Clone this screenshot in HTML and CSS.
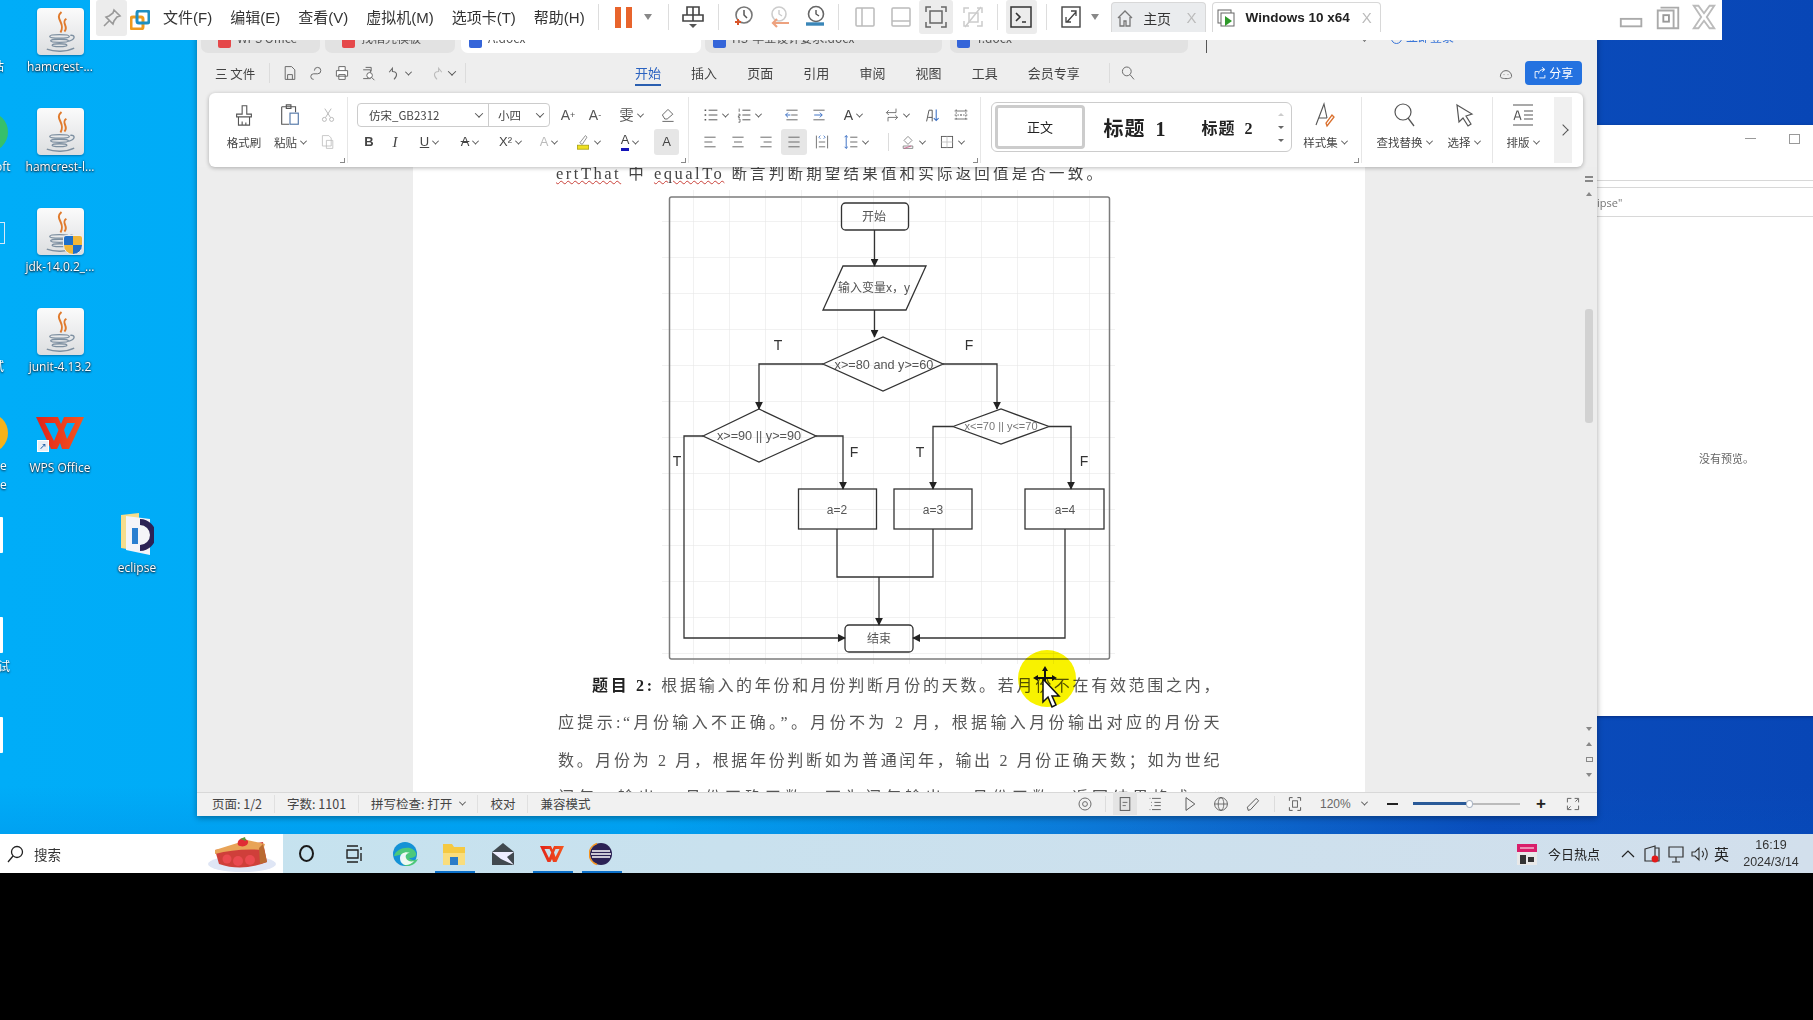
FILE: index.html
```html
<!DOCTYPE html>
<html lang="zh-CN">
<head>
<meta charset="utf-8">
<title>Windows 10 x64</title>
<link rel="stylesheet" href="styles.css">
</head>
<body>
<svg class="sprite" aria-hidden="true">
  <symbol id="java" viewBox="0 0 48 48">
    <path d="M25 4c-8 7 5 11-1 21M30 11c-6 4 3 8-2 13" fill="none" stroke="#e07a2c" stroke-width="2"/>
    <g fill="none" stroke="#7d8fa0" stroke-width="1.4"><ellipse cx="23" cy="29" rx="10" ry="1.8"/><ellipse cx="23" cy="33.5" rx="9" ry="1.6"/><ellipse cx="23" cy="38" rx="7.5" ry="1.5"/><path d="M10 42c8 3 20 3 28-1M34 28c5-1 6 4-2 6"/></g>
  </symbol>
  <symbol id="pin" viewBox="0 0 20 20"><path d="M12 2l6 6-3 1-3 4-1 3-7-7 3-1 4-3zM7 13l-5 5" fill="none" stroke="#999" stroke-width="1.6"/></symbol>
  <symbol id="vm" viewBox="0 0 20 20"><rect x="1" y="7" width="12" height="12" rx="2" fill="none" stroke="#ef9a1d" stroke-width="3"/><rect x="7" y="1" width="12" height="12" rx="2" fill="none" stroke="#1f8fc2" stroke-width="3"/></symbol>
  <symbol id="send" viewBox="0 0 24 24"><path d="M6 2h12v8H6zM2 10h20v6H2zM12 2v8M12 10v6" fill="none" stroke="#444" stroke-width="1.6"/><path d="M8 19h8l-4 4z" fill="#555"/></symbol>
  <symbol id="s1" viewBox="0 0 24 24"><circle cx="13" cy="10" r="8" fill="none" stroke="#777" stroke-width="1.6"/><path d="M13 5v5l3 3" fill="none" stroke="#555" stroke-width="1.5"/><path d="M4 17h6M7 14v6" stroke="#d8552a" stroke-width="2"/></symbol>
  <symbol id="s2" viewBox="0 0 24 24"><circle cx="12" cy="9" r="7" fill="none" stroke="#ccc" stroke-width="1.6"/><path d="M12 5v4l3 2" fill="none" stroke="#ccc" stroke-width="1.4"/><path d="M22 18H6M10 14l-4 4 4 4" fill="none" stroke="#eda27f" stroke-width="2.2"/></symbol>
  <symbol id="s3" viewBox="0 0 24 24"><circle cx="13" cy="9" r="7.5" fill="none" stroke="#666" stroke-width="1.6"/><path d="M13 5v4l3 2" fill="none" stroke="#555" stroke-width="1.4"/><path d="M3 19h18" stroke="#3a86b8" stroke-width="3.4"/></symbol>
  <symbol id="pl" viewBox="0 0 24 24"><rect x="3" y="3" width="18" height="18" rx="1" fill="none" stroke="#bbb" stroke-width="1.5"/><path d="M9 3v18" stroke="#bbb" stroke-width="1.5"/></symbol>
  <symbol id="pb" viewBox="0 0 24 24"><rect x="3" y="3" width="18" height="18" rx="1" fill="none" stroke="#bbb" stroke-width="1.5"/><path d="M3 16h18" stroke="#bbb" stroke-width="1.5"/></symbol>
  <symbol id="fit" viewBox="0 0 24 24"><path d="M2 7V2h5M17 2h5v5M22 17v5h-5M7 22H2v-5" fill="none" stroke="#666" stroke-width="1.5"/><rect x="6" y="6" width="12" height="12" fill="none" stroke="#666" stroke-width="1.5"/></symbol>
  <symbol id="nofit" viewBox="0 0 24 24"><path d="M3 8V3h5M16 3h5v5M21 16v5h-5M8 21H3v-5M4 22L20 2" fill="none" stroke="#ccc" stroke-width="1.5"/><rect x="8" y="8" width="9" height="9" fill="none" stroke="#ccc" stroke-width="1.5"/></symbol>
  <symbol id="term" viewBox="0 0 24 24"><rect x="2" y="2" width="20" height="20" fill="none" stroke="#333" stroke-width="1.5"/><path d="M7 8l4 4-4 4M13 17h4" fill="none" stroke="#333" stroke-width="1.6"/></symbol>
  <symbol id="exp" viewBox="0 0 24 24"><rect x="3" y="2" width="18" height="20" fill="none" stroke="#444" stroke-width="1.4"/><path d="M8 17L17 7M12 6h5v5M7 12v5h5" fill="none" stroke="#444" stroke-width="1.3"/></symbol>
  <symbol id="home" viewBox="0 0 20 20"><path d="M3 10l7-7 7 7M5 9v9h4v-5h2v5h4V9" fill="none" stroke="#777" stroke-width="1.3"/></symbol>
  <symbol id="vtab" viewBox="0 0 20 20"><rect x="2" y="2" width="13" height="13" fill="none" stroke="#666"/><rect x="5" y="5" width="13" height="13" fill="#fff" stroke="#666"/><path d="M9 8l7 5-7 5z" fill="#2f9a2a"/></symbol>
  <symbol id="wmin" viewBox="0 0 30 30"><rect x="3" y="17" width="22" height="8" fill="none" stroke="#aaa" stroke-width="2"/></symbol>
  <symbol id="wres" viewBox="0 0 30 30"><path d="M7 5h19v22H4V8h17v19" fill="none" stroke="#aaa" stroke-width="2"/><rect x="10" y="13" width="6" height="7" fill="none" stroke="#999" stroke-width="2"/></symbol>
  <symbol id="wclose" viewBox="0 0 30 30"><path d="M4 3h5l6 8 6-8h5l-8 12 8 12h-5l-6-8-6 8H4l8-12z" fill="none" stroke="#bbb" stroke-width="2"/></symbol>
  <symbol id="save" viewBox="0 0 20 20"><path d="M4 2h8l4 4v12H4zM7 18v-6h6v6" fill="none" stroke="#666" stroke-width="1.2"/></symbol>
  <symbol id="expo" viewBox="0 0 20 20"><path d="M7 18a3 3 0 0 1 0-7h5a4 4 0 1 0-4-4" fill="none" stroke="#666" stroke-width="1.2"/></symbol>
  <symbol id="print" viewBox="0 0 20 20"><path d="M6 7V2h8v5M3 7h14v7H3zM6 12h8v6H6z" fill="#fff" stroke="#666" stroke-width="1.2"/></symbol>
  <symbol id="prev" viewBox="0 0 20 20"><path d="M7 3h7v5M4 6h9v11H4" fill="none" stroke="#666" stroke-width="1.2"/><circle cx="12" cy="13" r="3.5" fill="#fff" stroke="#666" stroke-width="1.2"/><path d="M14.5 15.5L18 19" stroke="#666" stroke-width="1.2"/></symbol>
  <symbol id="undo" viewBox="0 0 20 20"><path d="M4 9l4-5v4c6 0 7 5 2 10" fill="none" stroke="#666" stroke-width="1.3"/></symbol>
  <symbol id="redo" viewBox="0 0 20 20"><path d="M16 9l-4-5v4c-6 0-7 5-2 10" fill="none" stroke="#bbb" stroke-width="1.3"/></symbol>
  <symbol id="search" viewBox="0 0 20 20"><circle cx="8.5" cy="8" r="5.5" fill="none" stroke="#666" stroke-width="1.2"/><path d="M12.5 12l5 6" stroke="#666" stroke-width="1.2"/></symbol>
  <symbol id="cloud" viewBox="0 0 20 20"><path d="M3 14a7 7 0 1 1 14 0c0 2-2 3-7 3s-7-1-7-3z" fill="none" stroke="#666" stroke-width="1.2"/><path d="M7 12h1M12 12h1" stroke="#666"/></symbol>
  <symbol id="share" viewBox="0 0 20 20"><path d="M6 17H3V8h5M17 13v4h-8M8 11c0-4 3-6 8-6M13 2l4 3-4 3" fill="none" stroke="#fff" stroke-width="1.3"/></symbol>
  <symbol id="brush" viewBox="0 0 26 26"><path d="M5 12h6V3h5v9h5v3H5zM7 15v9h12v-9M11 24v-4M15 24v-3" fill="none" stroke="#555" stroke-width="1.2"/></symbol>
  <symbol id="paste" viewBox="0 0 26 26"><path d="M4 4h15v6M4 4v19h8M9 2h5v4H9z" fill="none" stroke="#555" stroke-width="1.2"/><rect x="13" y="11" width="9" height="12" fill="none" stroke="#5b7dab" stroke-width="1.3"/></symbol>
  <symbol id="cut" viewBox="0 0 20 20"><path d="M6 2l7 11M14 2L7 13" stroke="#aaa"/><circle cx="5.5" cy="15.5" r="2.5" fill="none" stroke="#aaa"/><circle cx="14.5" cy="15.5" r="2.5" fill="none" stroke="#aaa"/></symbol>
  <symbol id="copy" viewBox="0 0 20 20"><path d="M3 2h8l3 3v10H3z M8 8h8v10H8z" fill="none" stroke="#bbb"/></symbol>
  <symbol id="erase" viewBox="0 0 20 20"><path d="M3 10l7-7 6 6-7 6H6zM3 18h14" fill="none" stroke="#666" stroke-width="1.2"/></symbol>
  <symbol id="hl" viewBox="0 0 20 20"><path d="M6 11L13 2l2 2-6 9z" fill="none" stroke="#777"/><rect x="3" y="14" width="14" height="5" fill="#f0e020" stroke="#a7a010"/></symbol>
  <symbol id="list" viewBox="0 0 20 20"><path d="M7 4h11M7 10h11M7 16h11" stroke="#555" stroke-width="1.2"/><path d="M2 4h2M2 10h2M2 16h2" stroke="#555" stroke-width="2"/></symbol>
  <symbol id="nlist" viewBox="0 0 20 20"><path d="M8 4h10M8 10h10M8 16h10" stroke="#555" stroke-width="1.2"/><path d="M4 2v4M3 9h2v2H3v2h2M3 15h2v4H3" fill="none" stroke="#555"/></symbol>
  <symbol id="ind1" viewBox="0 0 20 20"><path d="M3 4h14M9 10h8M3 16h14" stroke="#666" stroke-width="1.2"/><path d="M8 10H2M5 7l-3 3 3 3" fill="none" stroke="#3a6fc4" stroke-width="1.2"/></symbol>
  <symbol id="ind2" viewBox="0 0 20 20"><path d="M3 4h14M3 16h14" stroke="#666" stroke-width="1.2"/><path d="M4 10h10M11 7l3 3-3 3" fill="none" stroke="#3a6fc4" stroke-width="1.2"/></symbol>
  <symbol id="swap" viewBox="0 0 20 20"><path d="M3 7h12v-5M3 7l3-3M3 7l3 3M17 13H5v5M17 13l-3-3M17 13l-3 3" fill="none" stroke="#666" stroke-width="1.1"/></symbol>
  <symbol id="sort" viewBox="0 0 20 20"><path d="M2 18l3-14h4v14M4 13h5" fill="none" stroke="#555" stroke-width="1.2"/><path d="M14 3v14M11 14l3 3 3-3" fill="none" stroke="#3a6fc4" stroke-width="1.3"/></symbol>
  <symbol id="tbl" viewBox="0 0 20 20"><path d="M2 5h16M2 15h16" stroke="#555"/><path d="M2 10h16M4 3v14M16 3v14M10 9v2" stroke="#555" stroke-dasharray="2 1.5"/></symbol>
  <symbol id="al" viewBox="0 0 20 20"><path d="M3 4h14M3 10h10M3 16h14" stroke="#666" stroke-width="1.2"/></symbol>
  <symbol id="ac" viewBox="0 0 20 20"><path d="M3 4h14M5 10h10M3 16h14" stroke="#666" stroke-width="1.2"/></symbol>
  <symbol id="ar" viewBox="0 0 20 20"><path d="M3 4h14M7 10h10M3 16h14" stroke="#666" stroke-width="1.2"/></symbol>
  <symbol id="aj" viewBox="0 0 20 20"><path d="M3 4h14M3 10h14M3 16h14" stroke="#666" stroke-width="1.2"/></symbol>
  <symbol id="dist" viewBox="0 0 20 20"><path d="M3 2v16M17 2v16M6 10h8M6 16h8" stroke="#666" stroke-width="1.1"/><path d="M8 2L6 4l2 2M12 2l2 2-2 2" fill="none" stroke="#3a6fc4"/></symbol>
  <symbol id="ls" viewBox="0 0 20 20"><path d="M9 4h9M9 10h9M9 16h9" stroke="#666" stroke-width="1.2"/><path d="M4 2v16M2 4l2-2 2 2M2 16l2 2 2-2" fill="none" stroke="#3a6fc4" stroke-width="1.2"/></symbol>
  <symbol id="shade" viewBox="0 0 20 20"><path d="M5 8l5-5 5 5-5 5zM4 15h12v3H4z" fill="none" stroke="#777"/><path d="M5 18l9-3" stroke="#c58" /></symbol>
  <symbol id="bord" viewBox="0 0 20 20"><rect x="3" y="3" width="14" height="14" fill="none" stroke="#555" stroke-width="1.1"/><path d="M10 3v14M3 10h14" stroke="#bbb"/></symbol>
  <symbol id="stl" viewBox="0 0 26 26"><path d="M4 23L12 2l3 14M7 16h8" fill="none" stroke="#555" stroke-width="1.1"/><path d="M15 24l7-9-2-2-6 8z" fill="none" stroke="#d9702e" stroke-width="1.3"/></symbol>
  <symbol id="find" viewBox="0 0 26 26"><circle cx="12" cy="10" r="8" fill="none" stroke="#555" stroke-width="1.2"/><path d="M17 16l6 8" stroke="#555" stroke-width="1.3"/></symbol>
  <symbol id="sel" viewBox="0 0 26 26"><path d="M6 3l15 9-6 2 5 8-3 2-5-8-4 4z" fill="none" stroke="#555" stroke-width="1.2"/></symbol>
  <symbol id="lay" viewBox="0 0 26 26"><path d="M3 3h20M3 23h20M14 9h9M14 13h9M14 17h9M4 18l3-9h1l3 9M5 15h5" fill="none" stroke="#555" stroke-width="1.1"/></symbol>
  <symbol id="eye" viewBox="0 0 20 20"><circle cx="10" cy="10" r="7.5" fill="none" stroke="#666" stroke-width="1.2"/><circle cx="10" cy="10" r="3" fill="none" stroke="#666" stroke-width="1.2"/></symbol>
  <symbol id="pdoc" viewBox="0 0 20 20"><rect x="4" y="2" width="12" height="16" fill="none" stroke="#555" stroke-width="1.2"/><path d="M7 8h6M7 12h4" stroke="#555"/></symbol>
  <symbol id="outl" viewBox="0 0 20 20"><path d="M5 3h11M8 8h8M8 12h8M5 17h11" stroke="#555" stroke-width="1.1"/><path d="M2 3h1M4 8h1M4 12h1M2 17h1" stroke="#555"/></symbol>
  <symbol id="play" viewBox="0 0 20 20"><path d="M5 2l11 8-11 8z" fill="none" stroke="#555" stroke-width="1.2"/></symbol>
  <symbol id="globe" viewBox="0 0 20 20"><circle cx="10" cy="10" r="8" fill="none" stroke="#555" stroke-width="1.1"/><ellipse cx="10" cy="10" rx="3.5" ry="8" fill="none" stroke="#555"/><path d="M2 10h16" stroke="#555"/></symbol>
  <symbol id="penc" viewBox="0 0 20 20"><path d="M4 18l-1-4L14 3l3 3L7 17z" fill="none" stroke="#555" stroke-width="1.2"/></symbol>
  <symbol id="frame" viewBox="0 0 20 20"><path d="M3 6V2h4M13 2h4v4M17 14v4h-4M7 18H3v-4" fill="none" stroke="#555" stroke-width="1.2"/><rect x="7" y="6" width="6" height="8" fill="none" stroke="#555" stroke-width="1.1"/></symbol>
  <symbol id="full" viewBox="0 0 20 20"><path d="M3 8V3h5M12 3h5v5M17 12v5h-5M8 17H3v-5M13 7l3-3M7 13l-3 3" fill="none" stroke="#555" stroke-width="1.1"/></symbol>
  <symbol id="wps" viewBox="0 0 48 34"><defs><linearGradient id="wg" x1="0" x2="1" y1="0" y2="0"><stop offset="0" stop-color="#e2231a"/><stop offset="1" stop-color="#f4571f"/></linearGradient></defs><path fill="url(#wg)" fill-rule="evenodd" d="M0 1H22L25 8 28 1H48L33 33H26L24 27 21 33H15ZM9 7 18 25 22.500 14 19 7ZM31 7 28 14 31 23 39 7Z"/></symbol>
  <symbol id="ecl" viewBox="0 0 24 24"><circle cx="12" cy="12" r="11" fill="#2c2255"/><path d="M3 9h18M2 12h20M3 15h18" stroke="#fff" stroke-width="1.4"/><path d="M8 1.500a11 11 0 0 0 0 21" fill="none" stroke="#f7941e" stroke-width="1.4"/></symbol>
</svg>

<main class="stage">
  <section class="desk-col">
    <figure class="dicon"><span class="jtile"><svg class="jsvg"><use href="#java"/></svg></span><figcaption>hamcrest-...</figcaption></figure>
    <figure class="dicon"><span class="jtile"><svg class="jsvg"><use href="#java"/></svg></span><figcaption>hamcrest-l...</figcaption></figure>
    <figure class="dicon"><span class="jtile"><svg class="jsvg"><use href="#java"/></svg><i class="shield"></i></span><figcaption>jdk-14.0.2_...</figcaption></figure>
    <figure class="dicon"><span class="jtile"><svg class="jsvg"><use href="#java"/></svg></span><figcaption>junit-4.13.2</figcaption></figure>
    <figure class="dicon wpsicon"><svg class="wpssvg"><use href="#wps"/></svg><i class="lnk"></i><figcaption>WPS Office</figcaption></figure>
  </section>
  <figure class="dicon eclipse-ic">
    <svg class="efold" viewBox="0 0 34 44"><path d="M1 3l18-2v38L1 36z" fill="#f6dd8c"/><path d="M6 4l24 3v36L6 38z" fill="#f4f4f8"/><rect x="12" y="16" width="6" height="16" fill="#2a7fd0"/><path d="M20 10a12 12 0 0 1 0 26" fill="none" stroke="#2c2255" stroke-width="6"/></svg>
    <figcaption>eclipse</figcaption>
  </figure>
  <span class="edge e1">站</span><i class="edgeball e2"></i><span class="edge e3">oft</span><i class="edgedoc e4"></i><span class="edge e5">试</span><i class="edgeball e6"></i><span class="edge e7">e</span><span class="edge e8">e</span><i class="edgewhite e9"></i><i class="edgewhite e10"></i><span class="edge e11">试</span><i class="edgewhite e12"></i>

  <aside class="back-win">
    <div class="back-ctl"><i class="bmin"></i><i class="bmax"></i></div>
    <div class="back-path">ipse"</div>
    <div class="back-body">没有预览。</div>
  </aside>

  <section class="wps">
    <div class="wtabs">
      <div class="wtab t1"><i class="tico red"></i>WPS Office</div>
      <div class="wtab t2"><i class="tico red"></i>找稻壳模板</div>
      <div class="wtab t3 on"><i class="tico blue"></i>A.docx</div>
      <div class="wtab t4"><i class="tico blue"></i>HS-毕业设计要求.docx</div>
      <div class="wtab t5"><i class="tico blue"></i>T.docx</div>
      <i class="tabbar"></i>
      <i class="tabdown"></i>
      <span class="login"><i class="lcirc"></i>立即登录</span>
    </div>
    <nav class="wmenu">
      <span class="wfile">三 文件</span><i class="vs vs1"></i>
      <svg class="i16 qa first"><use href="#save"/></svg>
      <svg class="i16 qa"><use href="#expo"/></svg>
      <svg class="i16 qa"><use href="#print"/></svg>
      <svg class="i16 qa"><use href="#prev"/></svg>
      <svg class="i16 qa"><use href="#undo"/></svg><b class="car qc"></b>
      <svg class="i16 qa q2"><use href="#redo"/></svg><b class="car big qc2"></b>
      <i class="vs vs2"></i>
      <div class="mtabs">
        <a class="active">开始</a><a>插入</a><a>页面</a><a>引用</a><a>审阅</a><a>视图</a><a>工具</a><a>会员专享</a>
      </div>
      <i class="vs vs3"></i>
      <svg class="i16 msearch"><use href="#search"/></svg>
      <svg class="i16 mcloud"><use href="#cloud"/></svg>
      <button class="sharebtn"><svg class="i14"><use href="#share"/></svg>分享</button>
    </nav>

    <div class="ribbon">
      <div class="grp g1">
        <div class="r1"><span class="cell w42"><svg class="i24"><use href="#brush"/></svg></span><span class="cell w50"><svg class="i24"><use href="#paste"/></svg></span><span class="cell w26"><svg class="i16"><use href="#cut"/></svg></span></div>
        <div class="r2"><span class="cell w42">格式刷</span><span class="cell w50">粘贴<b class="car"></b></span><span class="cell w26"><svg class="i16"><use href="#copy"/></svg></span></div>
        <i class="corner"></i>
      </div>
      <div class="grp g2">
        <div class="r1">
          <div class="fontbox"><span class="fname">仿宋_GB2312<b class="car big"></b></span><span class="fsize">小四<b class="car big"></b></span></div>
          <span class="cell w26 ml5 glyph">A<sup>+</sup></span><span class="cell w28 glyph">A<sup>-</sup></span><span class="cell w44 glyph">雯<b class="car"></b></span><span class="cell w26 ml2"><svg class="i16"><use href="#erase"/></svg></span>
        </div>
        <div class="r2 glyphs">
          <span class="cell w24 bold">B</span><span class="cell w28 ital">I</span><span class="cell w40 uline">U<b class="car"></b></span><span class="cell w41 strike">A<b class="car"></b></span><span class="cell w40">X²<b class="car"></b></span><span class="cell w37 faint">A<b class="car"></b></span><span class="cell w41"><svg class="i16"><use href="#hl"/></svg><b class="car"></b></span><span class="cell w43 colA"><span class="aul">A</span><b class="car"></b></span><span class="cell w25 ml3 graybtn">A</span>
        </div>
        <i class="corner"></i>
      </div>
      <div class="grp g3">
        <div class="r1"><span class="cell w32"><svg class="i16"><use href="#list"/></svg><b class="car"></b></span><span class="cell w34"><svg class="i16"><use href="#nlist"/></svg><b class="car"></b></span><span class="cell w26 ml14"><svg class="i16"><use href="#ind1"/></svg></span><span class="cell w26 ml1"><svg class="i16"><use href="#ind2"/></svg></span><span class="cell w42 glyph blueA">A<b class="car"></b></span><span class="cell w35 ml5"><svg class="i16"><use href="#swap"/></svg><b class="car"></b></span><span class="cell w26 ml6"><svg class="i16"><use href="#sort"/></svg></span><span class="cell w26 ml2"><svg class="i16"><use href="#tbl"/></svg></span></div>
        <div class="r2 gap2 back2"><span class="cell w26"><svg class="i16"><use href="#al"/></svg></span><span class="cell w26"><svg class="i16"><use href="#ac"/></svg></span><span class="cell w26"><svg class="i16"><use href="#ar"/></svg></span><span class="cell w26 graybtn"><svg class="i16"><use href="#aj"/></svg></span><span class="cell w26"><svg class="i16"><use href="#dist"/></svg></span><span class="cell w36"><svg class="i16"><use href="#ls"/></svg><b class="car"></b></span><i class="vs vsr"></i><span class="cell w36 ml3"><svg class="i16"><use href="#shade"/></svg><b class="car"></b></span><span class="cell w38"><svg class="i16"><use href="#bord"/></svg><b class="car"></b></span></div>
        <i class="corner"></i>
      </div>
      <div class="grp g4">
        <div class="stylebox">
          <span class="st0">正文</span><span class="st1">标题 1</span><span class="st2">标题 2</span>
          <span class="stscroll"><b class="up"></b><b class="down"></b><b class="down bar"></b></span>
        </div>
        <div class="bigcol bc-style"><svg class="i24"><use href="#stl"/></svg><span>样式集<b class="car"></b></span></div>
        <i class="corner"></i>
      </div>
      <div class="grp g5">
        <div class="bigcol bc-find"><svg class="i24"><use href="#find"/></svg><span>查找替换<b class="car"></b></span></div>
        <div class="bigcol bc-sel"><svg class="i24"><use href="#sel"/></svg><span>选择<b class="car"></b></span></div>
      </div>
      <div class="grp g6">
        <div class="bigcol bc-lay"><svg class="i24"><use href="#lay"/></svg><span>排版<b class="car"></b></span></div>
      </div>
      <div class="rmore"><i class="chev"></i></div>
    </div>

    <div class="docarea">
      <article class="page">
        <p class="lead"><span class="wavy">ertThat</span> 中 <span class="wavy">equalTo</span> 断言判断期望结果值和实际返回值是否一致。</p>
        <svg class="flow" viewBox="660 190 460 476" width="460" height="476">
          <defs>
            <pattern id="grid" patternUnits="userSpaceOnUse" x="693" y="221" width="36" height="36"><path d="M0 0H36M0 0V36" stroke="#e3e3e3" stroke-width="1" fill="none"/></pattern>
            <marker id="ah" viewBox="0 0 10 10" refX="9" refY="5" markerWidth="8" markerHeight="8" markerUnits="userSpaceOnUse" orient="auto"><path d="M0 0L10 5L0 10z" fill="#222"/></marker>
          </defs>
          <rect x="662" y="190" width="453" height="474" fill="url(#grid)"/>
          <rect x="669.5" y="197" width="440" height="462" rx="2" class="fr"/>
          <g class="sh">
            <rect x="841.5" y="203" width="67" height="27" rx="4"/>
            <path d="M843 266H926L906 310H823Z"/>
            <path d="M823 364L883 337L943 364L883 391Z"/>
            <path d="M703 436L759 409L816 436L759 462Z"/>
            <path d="M953 426.5L1001 409L1049 426.5L1001 444Z"/>
            <rect x="798.5" y="489" width="78" height="40"/>
            <rect x="894" y="489" width="78" height="40"/>
            <rect x="1025" y="489" width="79" height="40"/>
            <rect x="845" y="625" width="68" height="27" rx="4"/>
          </g>
          <g class="ln">
            <path d="M874.5 230V266" marker-end="url(#ah)"/>
            <path d="M874.5 310V337" marker-end="url(#ah)"/>
            <path d="M823 364H759V409" marker-end="url(#ah)"/>
            <path d="M943 364H997V409" marker-end="url(#ah)"/>
            <path d="M703 436H684V638H845" marker-end="url(#ah)"/>
            <path d="M816 436H843V489" marker-end="url(#ah)"/>
            <path d="M953 426.5H933V489" marker-end="url(#ah)"/>
            <path d="M1049 426.5H1071V489" marker-end="url(#ah)"/>
            <path d="M837 529V577H933V529"/>
            <path d="M879 577V625" marker-end="url(#ah)"/>
            <path d="M1065 529V638H913" marker-end="url(#ah)"/>
          </g>
          <g class="tx">
            <text x="874" y="221">开始</text>
            <text x="874" y="292">输入变量x，y</text>
            <text x="884" y="369" class="big">x&gt;=80 and y&gt;=60</text>
            <text x="759" y="440" class="big">x&gt;=90 || y&gt;=90</text>
            <text x="1001" y="430" class="sm">x&lt;=70 || y&lt;=70</text>
            <text x="837" y="514">a=2</text>
            <text x="933" y="514">a=3</text>
            <text x="1065" y="514">a=4</text>
            <text x="879" y="643">结束</text>
          </g>
          <g class="lb">
            <text x="778" y="350">T</text><text x="969" y="350">F</text>
            <text x="677" y="466">T</text><text x="854" y="457">F</text>
            <text x="920" y="457">T</text><text x="1084" y="466">F</text>
          </g>
        </svg>
        <div class="para">
          <p class="ln1"><b>题目 2:</b> 根据输入的年份和月份判断月份的天数。若月份不在有效范围之内，</p>
          <p>应提示:“月份输入不正确。”。月份不为 2 月，根据输入月份输出对应的月份天</p>
          <p>数。月份为 2 月，根据年份判断如为普通闰年，输出 2 月份正确天数；如为世纪</p>
          <p>闰年，输出 2 月份正确天数。不为闰年输出 2 月份天数。返回结果格式：“</p>
        </div>
        <div class="hilite"></div>
        <svg class="cursor" viewBox="0 0 36 46" width="36" height="46">
          <path d="M18 0l3 5h-2v6h6V9l5 3-5 3v-2h-6v2h-2v-2h-6v2L6 12l5-3v2h6V5h-2z" fill="#111"/>
          <path d="M16 13V36l5-5 4 10 4-2-4-9h7z" fill="#fff" stroke="#111" stroke-width="1.5"/>
        </svg>
      </article>
      <div class="rail">
        <i class="railtop"></i><i class="tri up"></i>
        <i class="thumb"></i>
        <i class="tri down"></i><i class="tri up dbl"></i><i class="dot"></i><i class="tri down dbl"></i>
      </div>
    </div>

    <footer class="status">
      <span class="sitem s-a">页面: 1/2</span><span class="sitem s-b">字数: 1101</span><span class="sitem s-c">拼写检查: 打开<b class="car"></b></span><span class="sitem s-d">校对</span><span class="sitem s-e">兼容模式</span>
      <span class="sright">
        <svg class="i16 st-eye"><use href="#eye"/></svg><i class="vs st-v"></i>
        <span class="st-doc"><svg class="i16"><use href="#pdoc"/></svg></span>
        <svg class="i16 st-o"><use href="#outl"/></svg>
        <svg class="i16 st-p"><use href="#play"/></svg>
        <svg class="i16 st-g"><use href="#globe"/></svg>
        <svg class="i16 st-n"><use href="#penc"/></svg><i class="vs st-v2"></i>
        <svg class="i16 st-f"><use href="#frame"/></svg>
        <span class="zoomv">120%<b class="car"></b></span>
        <i class="minus"></i>
        <span class="slider"><i class="sfill"></i><i class="sknob"></i></span>
        <span class="plus">+</span>
        <svg class="i16 st-x"><use href="#full"/></svg>
      </span>
    </footer>
  </section>

  <header class="vmbar">
    <span class="pinbtn"><svg class="i20"><use href="#pin"/></svg></span>
    <svg class="i20 vmlogo"><use href="#vm"/></svg>
    <div class="vmmenu"><span>文件(F)</span><span>编辑(E)</span><span>查看(V)</span><span>虚拟机(M)</span><span>选项卡(T)</span><span>帮助(H)</span></div>
    <i class="vsep m13"></i>
    <span class="pause"><i></i><i></i></span><b class="tri-d"></b>
    <i class="vsep m11"></i>
    <span class="vb w38 ml5"><svg class="i24"><use href="#send"/></svg></span>
    <i class="vsep m6"></i>
    <span class="vb ml6"><svg class="i24"><use href="#s1"/></svg></span><span class="vb"><svg class="i24"><use href="#s2"/></svg></span><span class="vb"><svg class="i24"><use href="#s3"/></svg></span>
    <i class="vsep m5"></i>
    <span class="vb ml8"><svg class="i24"><use href="#pl"/></svg></span><span class="vb"><svg class="i24"><use href="#pb"/></svg></span><span class="vb vbon"><svg class="i24"><use href="#fit"/></svg></span><span class="vb"><svg class="i24"><use href="#nofit"/></svg></span>
    <i class="vsep m6"></i>
    <span class="vb vbon term"><svg class="i24"><use href="#term"/></svg></span>
    <i class="vsep m9"></i>
    <span class="vb ml6"><svg class="i24"><use href="#exp"/></svg></span><b class="tri-d small"></b>
    <div class="vtab home-t"><svg class="i20"><use href="#home"/></svg><span class="vt-t">主页</span><em>X</em></div>
    <div class="vtab win-t"><svg class="i20"><use href="#vtab"/></svg><strong>Windows 10 x64</strong><em>X</em></div>
    <div class="wctl"><svg class="i28"><use href="#wmin"/></svg><svg class="i28"><use href="#wres"/></svg><svg class="i28"><use href="#wclose"/></svg></div>
  </header>

  <footer class="taskbar">
    <div class="tsearch">
      <svg class="i20 ts-l" viewBox="0 0 20 20"><circle cx="11" cy="8" r="5.5" fill="none" stroke="#222" stroke-width="1.3"/><path d="M7 12l-5 6" stroke="#222" stroke-width="1.3"/></svg>
      <span class="ts-t">搜索</span>
      <svg class="pie" viewBox="0 0 70 36"><ellipse cx="35" cy="28" rx="34" ry="8" fill="#dfe6f5"/><path d="M8 14L56 6 60 26Q35 36 12 28Z" fill="#cf3f3a"/><path d="M8 14L40 4 58 8 56 14Q30 12 8 18Z" fill="#e8a458"/><path d="M56 8L60 26 53 28 52 12Z" fill="#b96a32"/><circle cx="20" cy="23" r="4.500" fill="#ea4a50"/><circle cx="31" cy="25" r="5" fill="#ea4a50"/><circle cx="43" cy="24" r="5" fill="#ea4a50"/><path d="M31 9c-2-6 6-9 10-4 1 5-6 7-10 4z" fill="#e02d35"/><path d="M33 3l5-2 1 4z" fill="#5a9a3a"/></svg>
    </div>
    <span class="tb-i c-cort"><i class="ring"></i></span>
    <span class="tb-i c-view"><svg class="i20" viewBox="0 0 20 20"><path d="M3 2h11M3 18h11M3 6h11v8H3zM17 3v3M17 9v8" fill="none" stroke="#222" stroke-width="1.4"/></svg></span>
    <span class="tb-i c-edge"><svg class="i28" viewBox="0 0 28 28"><circle cx="14" cy="14" r="12" fill="#1592d6"/><path d="M3 16c2-8 18-12 22-3 1 3-2 5-7 5 3 3 7 2 9 1-3 7-12 9-15 5-4-5 3-9 4-8-5-3-11 0-13 0z" fill="#4cc87b"/><path d="M9 18c0-5 6-7 10-5-3 0-5 2-4 5 1 3 5 4 8 3-3 4-9 5-11 3-2-1-3-3-3-6z" fill="#fff" opacity=".9"/></svg></span>
    <span class="tb-i c-file"><svg class="i28" viewBox="0 0 28 28"><path d="M3 4h9l2 3h11v18H3z" fill="#f5c942"/><rect x="3" y="13" width="22" height="12" fill="#f9dd7d"/><rect x="10" y="17" width="8" height="8" fill="#2a7cc8"/></svg></span>
    <span class="tb-i c-mail"><svg class="i28" viewBox="0 0 28 28"><path d="M3 12L14 3l11 9v13H3z" fill="#41494f"/><path d="M3 12l22 0-7 5 7 8-13-6z" fill="#eef"/></svg></span>
    <span class="tb-i c-wps"><svg class="i24" viewBox="0 0 48 34"><use href="#wps"/></svg></span>
    <span class="tb-i c-ecl"><svg class="i24" viewBox="0 0 24 24"><use href="#ecl"/></svg></span>
    <i class="tbline u1"></i><i class="tbline u2"></i><i class="tbline u3"></i>
    <div class="tray">
      <svg class="i24 store" viewBox="0 0 24 24"><rect x="2" y="6" width="20" height="17" fill="#e8e8e8"/><path d="M2 2h20v8H2z" fill="#d91e6b"/><path d="M5 6h14" stroke="#fff"/><rect x="5" y="13" width="6" height="9" fill="#333"/><rect x="13" y="15" width="6" height="5" fill="#333"/></svg>
      <span class="today">今日热点</span>
      <svg class="i14 up-c" viewBox="0 0 14 14"><path d="M1 10l6-6 6 6" fill="none" stroke="#222" stroke-width="1.2"/></svg>
      <svg class="i20 tr1" viewBox="0 0 20 20"><path d="M3 5l10-3v15H3z M13 4h4v13h-4" fill="none" stroke="#333" stroke-width="1.2"/><circle cx="13" cy="15" r="3.4" fill="#e31a1a"/></svg>
      <svg class="i20 tr2" viewBox="0 0 20 20"><path d="M3 3h14v10H3zM10 13v5M6 18h8" fill="none" stroke="#333" stroke-width="1.2"/></svg>
      <svg class="i20 tr3" viewBox="0 0 20 20"><path d="M2 8h3l4-4v12l-4-4H2zM12 7c2 2 2 4 0 6M15 4c3 4 3 8 0 12" fill="none" stroke="#333" stroke-width="1.1"/></svg>
      <span class="lang">英</span>
      <span class="clock"><span>16:19</span><span>2024/3/14</span></span>
    </div>
  </footer>
</main>
</body>
</html>
```

FILE: styles.css
```css
* { box-sizing: border-box; }
html, body { margin: 0; height: 100%; overflow: hidden; background: #000; }
body { font-family: "Noto Sans CJK SC", "Liberation Sans", sans-serif; }
p, figure { margin: 0; }
i, em { font-style: normal; }
.sprite { position: absolute; width: 0; height: 0; }
.stage {
  position: relative; width: 1813px; height: 873px; overflow: hidden; filter: blur(.4px);
  background:
    linear-gradient(180deg, rgba(0,0,0,0) 0, rgba(0,0,0,0) 90%, rgba(0,90,200,.25) 100%),
    linear-gradient(90deg, #00adf8 0, #00a9f5 36%, #0b86e0 56%, #0f6fd0 66%, #0a4cbb 82%, #0846b6 100%);
}
.i14 { width: 14px; height: 14px; flex: none; }
.i16 { width: 16px; height: 16px; flex: none; }
.i20 { width: 20px; height: 20px; flex: none; }
.i24 { width: 24px; height: 24px; flex: none; }
.i28 { width: 28px; height: 28px; flex: none; }

/* Desktop */
.desk-col { position: absolute; left: 10px; top: 8px; display: grid; grid-auto-rows: 100px; width: 100px; }
.dicon { display: flex; flex-direction: column; align-items: center; }
.dicon figcaption { font: 12px/14px "Open Sans", "Liberation Sans", sans-serif; color: #fff; text-shadow: 0 1px 2px #123, 0 0 2px #123; margin-top: 5px; white-space: nowrap; }
.jtile { position: relative; width: 47px; height: 47px; border-radius: 4px; background: linear-gradient(#fbfbfb, #dcdee0); box-shadow: 0 1px 2px rgba(0,40,80,.4); }
.jsvg { width: 47px; height: 47px; display: block; }
.shield { position: absolute; right: 1px; bottom: 0; width: 20px; height: 20px; border-radius: 3px 3px 10px 10px; background: conic-gradient(#f3b637 0 25%, #1f6fc8 0 50%, #f3b637 0 75%, #1f6fc8 0); border: 1px solid #eee; }
.wpsicon { margin-top: 8px; position: relative; }
.wpssvg { width: 48px; height: 34px; margin-bottom: 6px; }
.lnk { position: absolute; left: 27px; top: 24px; width: 12px; height: 12px; background: #e9eef5; border: 1px solid #fff; font: 9px/10px "Liberation Sans", "DejaVu Sans", sans-serif; color: #1f5fa8; text-align: center; }
.lnk::after { content: "↗"; }
.eclipse-ic { position: absolute; left: 110px; top: 512px; width: 54px; }
.efold { width: 34px; height: 44px; }
.eclipse-ic figcaption { margin-top: 5px; }
.edge { position: absolute; font: 12px/14px "Open Sans", "Noto Sans CJK SC", sans-serif; color: #fff; text-shadow: 0 1px 2px #123; white-space: nowrap; }
.e1 { left: -8px; top: 60px; }
.e3 { left: -5px; top: 160px; }
.e5 { left: -8px; top: 360px; }
.e7 { left: 0; top: 459px; }
.e8 { left: 0; top: 478px; }
.e11 { left: -2px; top: 660px; }
.edgeball { position: absolute; left: -32px; width: 40px; height: 40px; border-radius: 50%; }
.e2 { top: 112px; background: #36c06a; }
.e6 { top: 413px; background: #f6b21a; }
.edgedoc { position: absolute; left: -10px; top: 222px; width: 15px; height: 22px; border: 1px solid #d5e8f8; }
.edgewhite { position: absolute; left: -2px; width: 5px; height: 36px; background: #fff; border-radius: 1px; }
.e9 { top: 517px; }
.e10 { top: 617px; }
.e12 { top: 717px; }

/* Window behind */
.back-win { position: absolute; left: 1560px; top: 125px; width: 260px; height: 591px; background: #fff; box-shadow: 0 1px 3px rgba(0,0,40,.4); display: flex; flex-direction: column; }
.back-ctl { height: 56px; border-bottom: 1px solid #d8d8d8; display: flex; padding: 9px 0 0 185px; gap: 33px; align-items: flex-start; }
.bmin { width: 11px; height: 1px; margin-top: 4px; background: #999; }
.bmax { width: 11px; height: 10px; border: 1px solid #999; }
.back-path { margin-top: 6px; height: 30px; padding-left: 37px; border-top: 1px solid #d8d8d8; border-bottom: 1px solid #d8d8d8; font: 11px/29px "Open Sans", sans-serif; color: #777; }
.back-body { flex: 1; padding: 233px 0 0 139px; font-size: 11px; line-height: 16px; color: #666; }

/* WPS window */
.wps { position: absolute; left: 197px; top: 25px; width: 1400px; height: 791px; background: #eee; display: flex; flex-direction: column; box-shadow: 0 2px 6px rgba(0,0,0,.35); }
.wtabs { height: 29px; flex: none; display: flex; gap: 0; padding-left: 4px; background: #eee; font-size: 12px; color: #555; }
.wtab { height: 28px; display: flex; align-items: center; padding: 0 0 4px 17px; border-radius: 0 0 7px 7px; background: #e2e2e2; white-space: nowrap; overflow: hidden; gap: 6px; }
.wtab.on { background: #fff; padding-left: 8px; }
.t1 { width: 119px; }
.t2 { width: 130px; margin-left: 5px; }
.t3 { width: 240px; margin-left: 6px; }
.t4 { width: 237px; margin-left: 4px; padding-left: 8px; }
.t5 { width: 238px; margin-left: 8px; padding-left: 7px; }
.tico { width: 13px; height: 15px; margin-top: 6px; border-radius: 2px; flex: none; }
.tico.red { background: #e5484a; }
.tico.blue { background: #3565d9; }
.tabbar { width: 1px; height: 28px; margin-left: 18px; background: #555; }
.tabdown { width: 9px; height: 9px; margin: 6px 0 0 153px; border-right: 1px solid #666; border-bottom: 1px solid #666; transform: rotate(45deg); }
.login { margin-left: 22px; display: flex; gap: 4px; color: #3a76d8; font-size: 12px; line-height: 24px; }
.lcirc { width: 11px; height: 11px; margin-top: 8px; border: 1.5px solid #3a76d8; border-radius: 50%; }

.wmenu { height: 38px; flex: none; display: flex; align-items: center; font-size: 12px; color: #444; }
.wfile { margin-left: 18px; width: 54px; white-space: nowrap; font-size: 12.5px; }
.vs { width: 1px; height: 20px; background: #dcdcdc; flex: none; }
.qa { margin-left: 10px; }
.qa.first { margin-left: 12px; }
.qc { margin-left: 5px; }
.q2 { margin-left: 18px; }
.qc2 { margin-left: 14px; }
.vs2 { margin-left: 10px; }
.mtabs { display: flex; margin-left: 169px; font-size: 13px; line-height: 38px; color: #444; }
.mtabs a { margin-right: 30.1px; position: relative; }
.mtabs .active { color: #2a62c0; }
.mtabs .active::after { content: ""; position: absolute; left: 0; right: 0; bottom: 6px; height: 2px; background: #2a5fb0; }
.mtabs a:last-child { margin-right: 0; }
.vs3 { margin-left: 29px; }
.msearch { margin-left: 10px; }
.mcloud { margin-left: 362px; }
.sharebtn { margin-left: 11px; width: 57px; height: 24px; border: 0; border-radius: 4px; background: #2472e0; color: #fff; font: 12px/24px "Noto Sans CJK SC", sans-serif; display: flex; align-items: center; justify-content: center; gap: 2px; padding: 0; }

.car { display: inline-block; width: 5px; height: 5px; margin-left: 4px; border-right: 1px solid #555; border-bottom: 1px solid #555; transform: rotate(45deg) translate(-1px,-1px); flex: none; }
.car.big { width: 6px; height: 6px; }

/* Ribbon */
.ribbon { height: 74px; flex: none; margin: 1px 14px 0 12px; background: #fff; border-radius: 6px; box-shadow: 0 1px 4px rgba(0,0,0,.28); display: flex; position: relative; z-index: 2; font-size: 11.5px; color: #444; }
.grp { position: relative; height: 66px; margin-top: 4px; padding-top: 5px; border-right: 1px solid #e6e6e6; flex: none; }
.r1, .r2 { display: flex; height: 26px; align-items: center; }
.r2 { margin-top: 1px; }
.gap2 { gap: 2px; }
.back2 { margin-left: -2px; }
.cell { display: flex; align-items: center; justify-content: center; height: 26px; flex: none; white-space: nowrap; }
.w24 { width: 24px; } .w25 { width: 25px; } .w26 { width: 26px; } .w28 { width: 28px; } .w32 { width: 32px; }
.w34 { width: 34px; } .w35 { width: 35px; } .w36 { width: 36px; } .w37 { width: 37px; } .w38 { width: 38px; }
.w40 { width: 40px; } .w41 { width: 41px; } .w42 { width: 42px; } .w43 { width: 43px; } .w44 { width: 44px; } .w50 { width: 50px; }
.ml1 { margin-left: 1px; } .ml2 { margin-left: 2px; } .ml3 { margin-left: 3px; } .ml5 { margin-left: 5px; } .ml6 { margin-left: 6px; } .ml8 { margin-left: 8px; } .ml14 { margin-left: 14px; }
.corner { position: absolute; right: 2px; bottom: 0; width: 5px; height: 5px; border-right: 1px solid #888; border-bottom: 1px solid #888; }
.g1 { width: 139px; padding-left: 14px; }
.g1 .r2 { font-size: 11.5px; }
.g2 { width: 341px; padding-left: 9px; }
.fontbox { width: 193px; height: 24px; border: 1px solid #ccc; border-radius: 4px; display: flex; font-size: 11.5px; }
.fname { width: 131px; padding-left: 11px; border-right: 1px solid #ccc; display: flex; align-items: center; justify-content: space-between; padding-right: 6px; }
.fsize { flex: 1; padding-left: 9px; padding-right: 6px; display: flex; align-items: center; justify-content: space-between; }
.glyph { font: 14px/26px "Liberation Sans", "Noto Sans CJK SC", sans-serif; color: #555; }
.glyph sup { font-size: 9px; line-height: 1; color: #555; vertical-align: 5px; }
.glyphs { font: 13px/26px "Liberation Sans", sans-serif; color: #444; }
.bold { font-weight: 700; }
.ital { font-family: "Liberation Serif", serif; font-style: italic; font-size: 15px; }
.uline { text-decoration: underline; }
.strike { text-decoration: line-through; }
.faint { color: #bbb; }
.aul { border-bottom: 3px solid #1414b8; line-height: 14px; height: 18px; }
.graybtn { background: #e6e6e6; border-radius: 3px; }
.g3 { width: 292px; padding-left: 10px; }
.vsr { margin-left: 13px; height: 18px; }
.blueA { color: #444; }
.g4 { width: 381px; padding-left: 10px; display: flex; }
.stylebox { width: 301px; height: 50px; border: 1px solid #ccc; border-radius: 6px; display: flex; align-items: center; padding-left: 3px; font-family: "Liberation Serif", "Noto Sans CJK SC", serif; color: #222; }
.st0 { width: 90px; height: 44px; border: 3px solid #ccc; border-radius: 4px; font: 13px/38px "Noto Sans CJK SC", sans-serif; text-align: center; }
.st1 { width: 100px; text-align: center; font-size: 20px; font-weight: 700; letter-spacing: 1px; word-spacing: 4px; }
.st2 { width: 85px; text-align: center; font-size: 16px; font-weight: 700; letter-spacing: 1px; word-spacing: 4px; }
.stscroll { flex: 1; display: flex; flex-direction: column; align-items: center; gap: 10px; }
.stscroll b { width: 0; height: 0; border: 3px solid transparent; }
.stscroll .up { border-bottom-color: #ccc; border-top-width: 0; }
.stscroll .down { border-top-color: #666; border-bottom-width: 0; }
.stscroll .bar { box-shadow: 0 -3px 0 -2px #666; }
.bigcol { display: flex; flex-direction: column; align-items: center; flex: none; }
.bigcol .i24 { height: 26px; width: 26px; }
.bigcol span { line-height: 26px; margin-top: 1px; white-space: nowrap; display: flex; align-items: center; }
.bc-style { width: 62px; margin-left: 2px; }
.g5 { width: 131px; padding-left: 4px; display: flex; }
.bc-find { width: 76px; }
.bc-sel { width: 43px; }
.g6 { width: 59px; border-right: 0; }
.rmore { width: 18px; height: 66px; margin: 4px 0 0 2px; background: #f0f0f0; display: flex; align-items: center; justify-content: center; }
.chev { width: 8px; height: 8px; border-top: 1px solid #555; border-right: 1px solid #555; transform: rotate(45deg); }

/* Document */
.docarea { flex: 1; min-height: 0; display: flex; background: #ededed; overflow: hidden; }
.page { position: relative; margin-left: 216px; width: 952px; height: 100%; background: #fff; padding-left: 143px; font-family: "Liberation Serif", "Noto Sans CJK SC", serif; color: #444; overflow: hidden; }
.lead { width: 548px; height: 14px; line-height: 14px; font-size: 15.5px; text-align: justify; text-align-last: justify; letter-spacing: 2px; white-space: nowrap; }
.wavy { text-decoration: underline wavy #c9413a 1px; font-size: 16.5px; letter-spacing: 2.5px; }
.flow { display: block; margin: 9px 0 0 104px; }
.fr { fill: none; stroke: #7c7c7c; stroke-width: 1.5; }
.sh { fill: none; stroke: #333; stroke-width: 1.3; }
.ln { fill: none; stroke: #333; stroke-width: 1.3; }
.tx text { font: 12px "Liberation Sans", "Noto Sans CJK SC", sans-serif; fill: #555; text-anchor: middle; }
.tx .big { font-size: 12.7px; }
.tx .sm { font-size: 11px; fill: #777; }
.lb text { font: 14px "Liberation Sans", sans-serif; fill: #333; text-anchor: middle; }
.para { width: 664px; margin: .5px 0 0 2px; font-size: 16px; line-height: 37.5px; color: #555; }
.para p { height: 37.5px; text-align: justify; text-align-last: justify; letter-spacing: 2.6px; white-space: nowrap; }
.para .ln1 { padding-left: 34px; }
.para b { color: #222; }
.hilite { position: absolute; left: 605px; top: 483px; width: 58px; height: 57px; border-radius: 50%; background: #f8f200; mix-blend-mode: multiply; }
.cursor { position: absolute; left: 614px; top: 499px; }
.rail { width: 232px; flex: none; display: flex; flex-direction: column; align-items: flex-end; padding: 9px 4px 0 0; position: relative; }
.rail i { flex: none; }
.railtop { width: 8px; height: 6px; border-top: 2px solid #888; border-bottom: 2px solid #888; }
.tri { width: 0; height: 0; border: 3px solid transparent; margin-right: 1px; margin-top: 10px; }
.tri.up { border-bottom: 4px solid #888; border-top: 0; }
.tri.down { border-top: 4px solid #888; border-bottom: 0; }
.thumb { width: 8px; height: 114px; background: #d2d2d2; border-radius: 3px; margin-top: 113px; }
.rail .thumb + .tri { margin-top: 304px; }
.rail .dbl, .dot { margin-top: 11px; }
.dot { width: 7px; height: 5px; border: 1.5px solid #888; }

/* Status bar */
.status { height: 24px; flex: none; background: #f1f1f1; border-top: 1px solid #d8d8d8; padding-bottom: 2px; display: flex; align-items: center; font-size: 12.5px; color: #444; position: relative; z-index: 2; white-space: nowrap; }
.sitem { padding-right: 12px; margin-right: 12px; border-right: 1px solid #e0e0e0; line-height: 18px; display: flex; align-items: center; }
.s-a { margin-left: 15px; }
.s-c .car { margin-left: 8px; }
.s-e { border-right: 0; }
.sright { margin-left: auto; display: flex; align-items: center; height: 100%; }
.st-eye { margin-right: 12px; }
.st-v { height: 16px; }
.st-doc { width: 24px; height: 23px; margin-left: 7px; background: #e4e4e4; display: flex; align-items: center; justify-content: center; }
.st-o { margin-left: 11px; }
.st-p { margin-left: 18px; }
.st-g { margin-left: 15px; }
.st-n { margin-left: 16px; }
.st-v2 { height: 16px; margin-left: 13px; }
.st-f { margin-left: 12px; }
.zoomv { margin-left: 17px; width: 47px; display: flex; align-items: center; justify-content: space-between; font-family: "Liberation Sans", sans-serif; color: #666; font-size: 12px; }
.minus { width: 11px; height: 2px; margin-left: 20px; background: #222; }
.slider { position: relative; width: 107px; height: 2px; margin-left: 15px; background: #bbb; }
.sfill { position: absolute; left: 0; top: -0.5px; width: 55px; height: 2.5px; background: #2a5a98; }
.sknob { position: absolute; left: 53px; top: -3px; width: 7px; height: 8px; border-radius: 50%; background: #fff; border: 1px solid #a9b4c4; }
.plus { margin-left: 15px; width: 12px; font: 700 17px/20px "Liberation Sans", sans-serif; color: #222; text-align: center; }
.st-x { margin: 0 16px 0 18px; }

/* VMware bar */
.vmbar { position: absolute; left: 90px; top: 0; width: 1632px; height: 40px; background: #fff; display: flex; align-items: center; z-index: 5; color: #333; }
.vmbar > * { flex: none; }
.pinbtn { width: 31px; height: 36px; margin: -4px 0 0 6px; background: #ececec; border-radius: 3px; display: flex; align-items: center; justify-content: center; }
.vmlogo { margin-left: 3px; }
.vmmenu { display: flex; gap: 18px; margin-left: 13px; font: 15px/34px "Liberation Sans", "Noto Sans CJK SC", sans-serif; margin-top: -5px; }
.vsep { width: 1px; height: 26px; margin-top: -6px; background: #ddd; }
.m5 { margin-left: 5px; } .m6 { margin-left: 6px; } .m9 { margin-left: 9px; } .m11 { margin-left: 11px; } .m13 { margin-left: 13px; }
.pause { width: 32px; margin: -6px 0 0 9px; display: flex; justify-content: center; gap: 5px; }
.pause i { width: 6px; height: 21px; background: #e8642c; }
.tri-d { width: 0; height: 0; margin: -6px 5px 0 4px; border: 4px solid transparent; border-top: 6px solid #888; border-bottom: 0; }
.tri-d.small { margin-left: 2px; margin-right: 6px; }
.vb { width: 36px; height: 34px; margin-top: -6px; display: flex; align-items: center; justify-content: center; }
.vb.w38 { width: 38px; }
.vbon { background: #ececec; border-radius: 3px; width: 34px; margin-left: 0; margin-right: 2px; }
.term { width: 31px; margin-left: 8px; margin-right: 0; }
.vtab { height: 30px; margin: -6px 0 0 6px; padding: 0 4px 0 3px; border: 1px solid #d8d8d8; border-bottom: 0; border-radius: 4px 4px 0 0; display: flex; align-items: center; justify-content: space-between; font-size: 14px; }
.home-t { width: 95px; background: #eaecee; }
.vt-t { margin-right: 7px; }
.win-t { width: 169px; background: #fff; }
.win-t strong { font: 700 13.5px "Liberation Sans", sans-serif; color: #222; margin-left: -2px; }
.vtab em { font: 15px "Liberation Sans", sans-serif; color: #bbb; margin-right: 4px; }
.wctl { margin: -6px 0 0 auto; padding-right: 4px; display: flex; gap: 8px; }

/* Taskbar */
.taskbar { position: absolute; left: 0; right: 0; bottom: 0; height: 39px; background: linear-gradient(90deg, #c4e3ef 0, #c9e1ee 40%, #d2dfec 100%); display: flex; align-items: center; z-index: 6; }
.tsearch { width: 283px; height: 100%; background: #fff; display: flex; align-items: center; flex: none; }
.ts-l { margin-left: 6px; }
.ts-t { margin-left: 8px; font-size: 13.5px; color: #333; }
.pie { width: 70px; height: 36px; margin-left: 146px; }
.tb-i { display: flex; align-items: center; justify-content: center; width: 40px; height: 100%; flex: none; }
.c-cort { margin-left: 3px; }
.ring { width: 15px; height: 17px; border: 2.5px solid #1a1a1a; border-radius: 50%; }
.c-view { margin-left: 8px; }
.c-edge { margin-left: 11px; }
.c-file { margin-left: 9px; }
.c-mail, .c-wps, .c-ecl { margin-left: 9px; }
.tbline { position: absolute; bottom: 0; height: 2px; background: #0b6fc8; width: 40px; }
.u1 { left: 435px; }
.u2 { left: 533px; }
.u3 { left: 582px; }
.tray { margin-left: auto; padding-right: 6px; display: flex; align-items: center; color: #222; }
.store { margin-right: 9px; }
.today { font-size: 13px; width: 56px; white-space: nowrap; }
.up-c { margin-left: 17px; }
.tr1 { margin-left: 7px; }
.tr2 { margin-left: 4px; }
.tr3 { margin-left: 4px; }
.lang { margin-left: 4px; font-size: 15px; }
.clock { width: 72px; margin-left: 6px; display: flex; flex-direction: column; align-items: center; font: 12.5px/17px "Liberation Sans", sans-serif; color: #333; }
```
